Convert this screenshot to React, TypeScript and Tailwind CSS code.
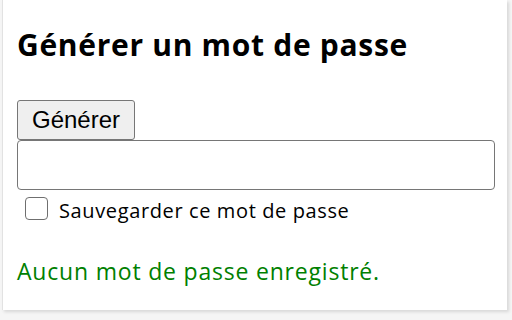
export default function App() {
  return (
    <div className="w-[512px] h-[320px] bg-[#f5f5f5] overflow-hidden">
      <div className="ml-[2px] w-[505px] h-[310px] bg-white border-l border-[#e2e2e2] shadow-[2px_2px_3px_rgba(0,0,0,0.12)] pl-[14px] pt-[24px] font-['Open_Sans',sans-serif] text-black">
        <h2 className="text-[30px] leading-[42px] font-bold tracking-[0.7px]">Générer un mot de passe</h2>
        <div className="mt-[34px]">
          <button className="h-[40px] w-[118px] border border-[#767676] rounded-[3px] bg-[#efefef] font-['Liberation_Sans',Arial,sans-serif] text-[24px] leading-none text-black">
            Générer
          </button>
        </div>
        <input
          type="text"
          className="block h-[50px] w-[478px] border border-[#767676] rounded-[4px] bg-white px-2"
        />
        <label className="flex items-center mt-[6px] ml-[8px] h-[24px]">
          <span className="w-[23px] h-[23px] border-[1.5px] border-[#6f6f6f] rounded-[4px] bg-white shrink-0" />
          <span className="ml-[11px] text-[20px] leading-[24px] mt-[6px] tracking-[0.62px]">Sauvegarder ce mot de passe</span>
        </label>
        <p className="mt-[36px] text-[23px] leading-[30px] text-[#008000] tracking-[0.8px]">Aucun mot de passe enregistré.</p>
      </div>
    </div>
  )
}
